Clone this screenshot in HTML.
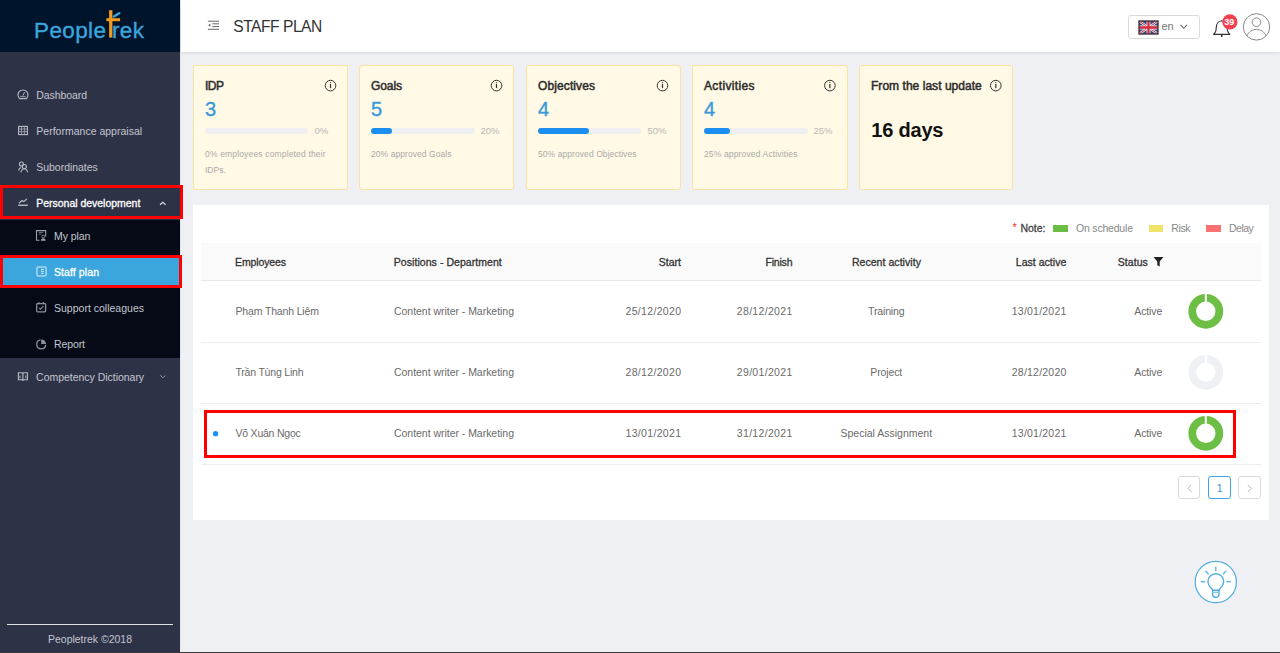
<!DOCTYPE html>
<html><head><meta charset="utf-8">
<style>
*{margin:0;padding:0;box-sizing:border-box}
html,body{width:1280px;height:653px;overflow:hidden;background:#eef0f4;font-family:"Liberation Sans",sans-serif;position:relative}
.a{position:absolute}
.tx{position:absolute;white-space:nowrap;line-height:1}
svg{position:absolute;overflow:visible}
</style></head><body>
<!-- sidebar -->
<div class="a" style="left:0;top:0;width:180px;height:653px;background:#2e3247"></div>
<div class="a" style="left:0;top:0;width:180px;height:52px;background:#00142b"></div>
<div class="a" style="left:180px;top:0;width:1px;height:653px;background:#e4e6ea"></div>
<div class="a" style="left:0;top:220px;width:180px;height:138px;background:#050a16"></div>
<!-- personal dev red box -->
<div class="a" style="left:0;top:185px;width:182.5px;height:34px;border:3px solid #ff0000"></div>
<!-- staff plan -->
<div class="a" style="left:0;top:255px;width:182px;height:33px;background:#3ba5de;border:3px solid #ff0000"></div>
<div class="a" style="left:7px;top:624px;width:166px;height:1px;background:#dfe1e6"></div>

<!-- logo -->
<svg width="180" height="52" style="left:0;top:0">
  <text x="34" y="37.6" font-family="Liberation Sans" font-size="22.5" fill="#3aa6df" textLength="72" lengthAdjust="spacing" stroke="#3aa6df" stroke-width="0.35">People</text>
  <text x="112" y="37.6" font-family="Liberation Sans" font-size="22.5" fill="#3aa6df" textLength="32" lengthAdjust="spacing" stroke="#3aa6df" stroke-width="0.35">rek</text>
  <rect x="109.1" y="10.2" width="3.3" height="27.4" fill="#f29a1d"/>
  <rect x="106.3" y="18.2" width="13.8" height="3" fill="#f29a1d"/>
  <path d="M113.8 16.6 L119.3 13.2" stroke="#3aa6df" stroke-width="2.4" stroke-linecap="round"/>
</svg>
<!-- sidebar icons -->
<svg width="180" height="400" style="left:0;top:0" fill="none" stroke="#b9bcc6" stroke-width="1.1">
  <!-- dashboard gauge -->
  <path d="M19.6 98.6 a5 5 0 1 1 6.8 0 z"/>
  <path d="M22.9 95.6 L24.6 92.2" stroke-width="1"/>
  <path d="M20.3 96.6 h5.2" stroke-width="0.8"/>
  <!-- grid -->
  <rect x="18.6" y="126.4" width="8.8" height="8.2"/>
  <path d="M18.6 129 h8.8 M18.6 131.7 h8.8 M21.5 126.4 v8.2 M24.4 126.4 v8.2" stroke-width="0.7"/>
  <!-- subordinates -->
  <circle cx="21.4" cy="164" r="2"/>
  <circle cx="24.3" cy="166.6" r="2.1"/>
  <path d="M18.5 170.5 c0.4-1.6 1.2-2.6 2.4-3.1 M20.9 172.3 c0.6-2.4 1.8-3.5 3.4-3.5 s2.8 1.1 3.4 3.5"/>
  <!-- personal dev chart -->
  <path d="M18.2 205.3 h9.6" stroke-width="1.4"/>
  <path d="M19 203.3 l3-2.8 1.8 1.1 3-2.6" stroke-width="1.2"/>
  <!-- chevron up -->
  <path d="M160 204.8 l2.8-2.6 2.8 2.6" stroke="#d8dae0" stroke-width="1.2"/>
  <!-- my plan -->
  <path d="M39.5 240.2 h-3 v-9.6 h9.2 v6" stroke="#9da0a8"/>
  <path d="M38.8 232.4 h4.5 M38.8 234.1 h2.5" stroke="#9da0a8" stroke-width="0.7"/>
  <circle cx="43.2" cy="236.6" r="1.4" stroke="#9da0a8" stroke-width="0.8"/>
  <path d="M40.8 240.8 c0-1.6 1-2.5 2.4-2.5 s2.4 0.9 2.4 2.5 z" fill="#9da0a8" stroke="none"/>
  <!-- staff plan -->
  <rect x="36.9" y="267.1" width="9.2" height="9" rx="1.3" stroke="#a9d8f2" stroke-width="1.5"/>
  <path d="M41 269.5 h2.6 M41 271.4 h2.6 M41 273.3 h2.6" stroke="#e6f5fc" stroke-width="0.9"/>
  <!-- support colleagues -->
  <rect x="36.7" y="303.6" width="8.9" height="8.2" rx="0.8" stroke="#8c9099" stroke-width="1.3"/>
  <path d="M38.9 302 v2.2 M43.3 302 v2.2" stroke="#8c9099" stroke-width="1.2"/>
  <path d="M39.2 307.8 l1.2 1.4 3.1-3" stroke="#8c9099" stroke-width="1.1"/>
  <!-- report -->
  <path d="M40.5 339.9 a4.5 4.5 0 1 0 5.2 5" stroke="#8c9099" stroke-width="1.3"/>
  <path d="M41.2 339.4 a4.6 4.6 0 0 1 4.8 4.6 h-4.8 z" fill="#8c9099" stroke="none"/>
  <!-- book -->
  <path d="M18.4 372.8 h3.6 l0.9 0.7 0.9-0.7 h3.6 v7 h-3.6 l-0.9 0.6-0.9-0.6 h-3.6 z M22.9 373.5 v6.8" stroke-width="1.1"/>
  <path d="M20 375.5 v2.8 M25.8 375.5 v2.8" stroke-width="0.9"/>
  <!-- chevron down -->
  <path d="M160.3 375.3 l2.6 2.5 2.6-2.5" stroke="#8a8ea0" stroke-width="1"/>
</svg>

<!-- header -->
<div class="a" style="left:181px;top:0;width:1099px;height:52px;background:#fff;box-shadow:0 1px 3px rgba(0,0,0,.10)"></div>
<svg width="30" height="30" style="left:200px;top:10px" fill="none" stroke="#666" stroke-width="1">
  <path d="M7.9 11.2 h11.1 M12.3 13.8 h6.7 M12.3 16.6 h6.7 M7.9 19.3 h11.1"/>
  <path d="M10.3 13.6 l-2 1.6 2 1.6z" fill="#555" stroke="none"/>
</svg>
<div class="a" style="left:1127.5px;top:15px;width:72px;height:23.5px;border:1px solid #dadada;border-radius:3px;background:#fff"></div>
<svg width="19" height="13" style="left:1139px;top:20.7px" viewBox="0 0 60 40" preserveAspectRatio="none">
  <rect width="60" height="40" fill="#3a4a8a"/>
  <path d="M0 0 L60 40 M60 0 L0 40" stroke="#e8e0e8" stroke-width="8"/>
  <path d="M0 0 L60 40 M60 0 L0 40" stroke="#b8323f" stroke-width="3"/>
  <path d="M30 0 V40 M0 20 H60" stroke="#f0e8ee" stroke-width="12"/>
  <path d="M30 0 V40 M0 20 H60" stroke="#d42a3a" stroke-width="7"/>
  <rect width="60" height="40" fill="none" stroke="#3a2a30" stroke-width="4"/>
</svg>
<svg width="12" height="8" style="left:1179.5px;top:23.8px" fill="none" stroke="#666" stroke-width="1.1">
  <path d="M0.6 0.8 L3.8 4.3 L7 0.8"/>
</svg>
<!-- bell -->
<svg width="30" height="30" style="left:1205px;top:10px" fill="none" stroke="#333" stroke-width="1.15">
  <path d="M8.6 24.3 c1.6-1 2.6-2.2 2.6-6.2 c0-4.4 2.4-7.2 5.5-7.4 c3.1 0.2 5.5 3 5.5 7.4 c0 4 1 5.2 2.6 6.2 z" stroke-linejoin="round"/>
  <path d="M16.7 24.8 v2.2" stroke-width="1.6"/>
</svg>
<svg width="18" height="18" style="left:1220.5px;top:13px">
  <circle cx="8.9" cy="8.9" r="7.6" fill="#f5414f"/>
</svg>
<!-- avatar -->
<svg width="32" height="32" style="left:1240px;top:10px" fill="none" stroke="#8a8a8a" stroke-width="1">
  <circle cx="16.5" cy="16.9" r="13.2"/>
  <circle cx="16.5" cy="12.2" r="4.3"/>
  <path d="M6.8 26 c2-4.5 5.6-6.6 9.7-6.6 s7.7 2.1 9.7 6.6"/>
</svg>

<!-- cards -->
<div class="a" style="left:192.5px;top:64.6px;width:155px;height:125px;background:#fff9e5;border:1px solid #f9e3a0;border-radius:3px"></div>
<div class="a" style="left:359px;top:64.6px;width:155px;height:125px;background:#fff9e5;border:1px solid #f9e3a0;border-radius:3px"></div>
<div class="a" style="left:525.5px;top:64.6px;width:155px;height:125px;background:#fff9e5;border:1px solid #f9e3a0;border-radius:3px"></div>
<div class="a" style="left:692px;top:64.6px;width:155.5px;height:125px;background:#fff9e5;border:1px solid #f9e3a0;border-radius:3px"></div>
<div class="a" style="left:858.8px;top:64.6px;width:154.6px;height:125px;background:#fff9e5;border:1px solid #f9e3a0;border-radius:3px"></div>
<!-- bars -->
<div class="a" style="left:205px;top:128px;width:103px;height:6px;border-radius:3px;background:#eeeff1"></div>
<div class="a" style="left:371px;top:128px;width:103.5px;height:6px;border-radius:3px;background:#eeeff1"></div>
<div class="a" style="left:371px;top:128px;width:20.5px;height:6px;border-radius:3px;background:#1c8ef0"></div>
<div class="a" style="left:537.7px;top:128px;width:103.5px;height:6px;border-radius:3px;background:#eeeff1"></div>
<div class="a" style="left:537.7px;top:128px;width:51.7px;height:6px;border-radius:3px;background:#1c8ef0"></div>
<div class="a" style="left:704px;top:128px;width:103.5px;height:6px;border-radius:3px;background:#eeeff1"></div>
<div class="a" style="left:704px;top:128px;width:26px;height:6px;border-radius:3px;background:#1c8ef0"></div>
<!-- info icons -->
<svg width="1280" height="100" style="left:0;top:0" fill="none" stroke="#333" stroke-width="1">
  <g id="inf"><circle cx="330.5" cy="85.6" r="5.3"/><path d="M330.5 84 v4.2" stroke-width="1.2"/><circle cx="330.5" cy="82.6" r="0.7" fill="#333" stroke="none"/></g>
  <use href="#inf" x="166"/><use href="#inf" x="332"/><use href="#inf" x="499.4"/><use href="#inf" x="665.3"/>
</svg>

<!-- table panel -->
<div class="a" style="left:193px;top:205px;width:1076px;height:315px;background:#fff"></div>
<div class="a" style="left:201px;top:243px;width:1060px;height:38px;background:#fafafa;border-bottom:1px solid #e8e8e8"></div>
<div class="a" style="left:201px;top:341.5px;width:1060px;height:1px;background:#ececec"></div>
<div class="a" style="left:201px;top:402.5px;width:1060px;height:1px;background:#ececec"></div>
<div class="a" style="left:201px;top:463.5px;width:1060px;height:1px;background:#ececec"></div>
<!-- note -->
<div class="tx" style="left:1012.5px;top:222px;font-size:11px;color:#f5222d">*</div>
<div class="a" style="left:1052.7px;top:224.5px;width:15.3px;height:7px;background:#6cbd45"></div>
<div class="a" style="left:1148.7px;top:224.5px;width:14.8px;height:7px;background:#f0e36a"></div>
<div class="a" style="left:1205.7px;top:224.5px;width:15.3px;height:7px;background:#f87272"></div>
<!-- filter icon -->
<svg width="12" height="12" style="left:1152.5px;top:256px">
  <path d="M0.5 1 h10 l-3.8 4.6 v5 l-2.4-1.3 v-3.7 z" fill="#222"/>
</svg>
<!-- donuts -->
<svg width="1280" height="653" style="left:0;top:0">
  <g fill="none" stroke-width="7.7">
    <circle cx="1205.8" cy="311.3" r="13.55" stroke="#6cbf44"/>
    <circle cx="1205.8" cy="372.3" r="13.55" stroke="#eef0f4"/>
    <circle cx="1205.8" cy="433.3" r="13.55" stroke="#6cbf44"/>
  </g>
  <g fill="#fff">
    <rect x="1204.8" y="293" width="2" height="10"/>
    <rect x="1204.8" y="354" width="2" height="10"/>
    <rect x="1204.8" y="415" width="2" height="10"/>
  </g>
  <circle cx="215.6" cy="433.7" r="2.6" fill="#1890ff"/>
</svg>
<!-- red row box -->
<div class="a" style="left:203.5px;top:410px;width:1032.5px;height:48px;border:3px solid #ff0000"></div>
<!-- pagination -->
<div class="a" style="left:1178.4px;top:476.3px;width:22px;height:23px;border:1px solid #d9d9d9;border-radius:3px;background:#fff"></div>
<div class="a" style="left:1208px;top:476.3px;width:23px;height:23px;border:1px solid #3ea4e8;border-radius:3px;background:#fff"></div>
<div class="a" style="left:1238.4px;top:476.3px;width:22.2px;height:23px;border:1px solid #d9d9d9;border-radius:3px;background:#fff"></div>
<svg width="1280" height="653" style="left:0;top:0" fill="none" stroke="#b5b5b5" stroke-width="1">
  <path d="M1191.3 484.7 l-3.3 3.6 3.3 3.6"/>
  <path d="M1248 484.7 l3.3 3.6 -3.3 3.6"/>
</svg>
<!-- light bulb -->
<svg width="1280" height="653" style="left:0;top:0" fill="none" stroke="#4fabdf" stroke-width="1.2">
  <circle cx="1215.8" cy="582" r="20.6" fill="#fff"/>
  <g stroke-width="1.5" stroke-linecap="round" stroke="#6bb9e6">
  <path d="M1215.8 567.3 v3.4 M1201.3 581.8 h3.4 M1226.8 581.8 h3.4 M1205.8 571.3 l2.3 2.3 M1225.8 571.3 l-2.3 2.3"/>
  </g>
  <path d="M1212.6 590.2 c-0.3-1.8-4.7-3.7-4.7-8.5 a7.9 7.9 0 0 1 15.8 0 c0 4.8-4.4 6.7-4.7 8.5 z" stroke-width="1.4"/>
  <path d="M1212.6 590.2 v4.3 a3.2 2.8 0 0 0 6.4 0 v-4.3" stroke-width="1.4"/>
  <path d="M1212.6 592.4 h6.4" stroke-width="1.6" stroke="#8cc8ea"/>
</svg>
<div class="a" style="left:0;top:652px;width:1280px;height:1px;background:#3a3a3a"></div>
<div class='tx' style='left:36.30px;top:90.00px;font-size:10.5px;color:#c3c6d0;letter-spacing:-0.072px;'>Dashboard</div>
<div class='tx' style='left:36.30px;top:126.00px;font-size:10.5px;color:#c3c6d0;letter-spacing:0.008px;'>Performance appraisal</div>
<div class='tx' style='left:36.30px;top:162.00px;font-size:10.5px;color:#c3c6d0;letter-spacing:-0.036px;'>Subordinates</div>
<div class='tx' style='left:36.30px;top:198.00px;font-size:10.5px;color:#fff;-webkit-text-stroke:0.3px #fff;letter-spacing:-0.025px;'>Personal development</div>
<div class='tx' style='left:54.00px;top:231.00px;font-size:10.5px;color:#c3c6d0;letter-spacing:-0.078px;'>My plan</div>
<div class='tx' style='left:54.00px;top:267.00px;font-size:10.5px;color:#fff;-webkit-text-stroke:0.3px #fff;letter-spacing:0.090px;'>Staff plan</div>
<div class='tx' style='left:54.00px;top:303.00px;font-size:10.5px;color:#c3c6d0;letter-spacing:0.006px;'>Support colleagues</div>
<div class='tx' style='left:54.00px;top:339.00px;font-size:10.5px;color:#c3c6d0;letter-spacing:-0.103px;'>Report</div>
<div class='tx' style='left:36.10px;top:372.00px;font-size:10.5px;color:#c3c6d0;letter-spacing:-0.027px;'>Competency Dictionary</div>
<div class='tx' style='left:48.00px;top:634.00px;font-size:10.5px;color:#c3c6d0;letter-spacing:-0.015px;'>Peopletrek ©2018</div>
<div class='tx' style='left:233.30px;top:19.00px;font-size:15.6px;color:#333;letter-spacing:-0.477px;'>STAFF PLAN</div>
<div class='tx' style='left:1161.50px;top:21.00px;font-size:11px;color:#777;'>en</div>
<div class='tx' style='left:205.00px;top:80.00px;font-size:12px;color:#2d2d2d;-webkit-text-stroke:0.5px #2d2d2d;letter-spacing:-0.508px;'>IDP</div>
<div class='tx' style='left:205.00px;top:99.00px;font-size:20px;color:#3a9ad9;-webkit-text-stroke:0.4px #3a9ad9;'>3</div>
<div class='tx' style='left:314.50px;top:126.00px;font-size:9.5px;color:#b8b8b8;'>0%</div>
<div class='tx' style='left:205.00px;top:150.00px;font-size:8.5px;color:#a9a9a9;letter-spacing:0.162px;'>0% employees completed their</div>
<div class='tx' style='left:371.00px;top:80.00px;font-size:12px;color:#2d2d2d;-webkit-text-stroke:0.5px #2d2d2d;letter-spacing:-0.090px;'>Goals</div>
<div class='tx' style='left:371.00px;top:99.00px;font-size:20px;color:#3a9ad9;-webkit-text-stroke:0.4px #3a9ad9;'>5</div>
<div class='tx' style='left:480.50px;top:126.00px;font-size:9.5px;color:#b8b8b8;'>20%</div>
<div class='tx' style='left:371.00px;top:150.00px;font-size:8.5px;color:#a9a9a9;letter-spacing:0.065px;'>20% approved Goals</div>
<div class='tx' style='left:538.00px;top:80.00px;font-size:12px;color:#2d2d2d;-webkit-text-stroke:0.5px #2d2d2d;letter-spacing:0.108px;'>Objectives</div>
<div class='tx' style='left:538.00px;top:99.00px;font-size:20px;color:#3a9ad9;-webkit-text-stroke:0.4px #3a9ad9;'>4</div>
<div class='tx' style='left:647.50px;top:126.00px;font-size:9.5px;color:#b8b8b8;'>50%</div>
<div class='tx' style='left:538.00px;top:150.00px;font-size:8.5px;color:#a9a9a9;letter-spacing:0.074px;'>50% approved Objectives</div>
<div class='tx' style='left:704.00px;top:80.00px;font-size:12px;color:#2d2d2d;-webkit-text-stroke:0.5px #2d2d2d;letter-spacing:0.362px;'>Activities</div>
<div class='tx' style='left:704.00px;top:99.00px;font-size:20px;color:#3a9ad9;-webkit-text-stroke:0.4px #3a9ad9;'>4</div>
<div class='tx' style='left:813.50px;top:126.00px;font-size:9.5px;color:#b8b8b8;'>25%</div>
<div class='tx' style='left:704.00px;top:150.00px;font-size:8.5px;color:#a9a9a9;letter-spacing:0.143px;'>25% approved Activities</div>
<div class='tx' style='left:205.00px;top:166.00px;font-size:8.5px;color:#a9a9a9;'>IDPs.</div>
<div class='tx' style='left:871.00px;top:80.00px;font-size:12px;color:#2d2d2d;-webkit-text-stroke:0.5px #2d2d2d;letter-spacing:0.039px;'>From the last update</div>
<div class='tx' style='left:871.20px;top:120.00px;font-size:20px;color:#111;font-weight:bold;letter-spacing:-0.182px;'>16 days</div>
<div class='tx' style='left:1020.50px;top:223.00px;font-size:10.5px;color:#444;-webkit-text-stroke:0.3px #444;letter-spacing:-0.027px;'>Note:</div>
<div class='tx' style='left:1076.00px;top:223.00px;font-size:10.5px;color:#888;letter-spacing:-0.197px;'>On schedule</div>
<div class='tx' style='left:1171.30px;top:223.00px;font-size:10.5px;color:#888;letter-spacing:-0.407px;'>Risk</div>
<div class='tx' style='left:1229.00px;top:223.00px;font-size:10.5px;color:#888;letter-spacing:-0.515px;'>Delay</div>
<div class='tx' style='left:235.00px;top:257.00px;font-size:10.5px;color:#333;-webkit-text-stroke:0.3px #333;letter-spacing:-0.119px;'>Employees</div>
<div class='tx' style='left:393.80px;top:257.00px;font-size:10.5px;color:#333;-webkit-text-stroke:0.3px #333;letter-spacing:0.057px;'>Positions - Department</div>
<div class='tx' style='left:658.75px;top:257.00px;font-size:10.5px;color:#333;-webkit-text-stroke:0.3px #333;letter-spacing:0.016px;'>Start</div>
<div class='tx' style='left:765.50px;top:257.00px;font-size:10.5px;color:#333;-webkit-text-stroke:0.3px #333;letter-spacing:-0.203px;'>Finish</div>
<div class='tx' style='left:851.90px;top:257.00px;font-size:10.5px;color:#333;-webkit-text-stroke:0.3px #333;letter-spacing:0.051px;'>Recent activity</div>
<div class='tx' style='left:1015.80px;top:257.00px;font-size:10.5px;color:#333;-webkit-text-stroke:0.3px #333;letter-spacing:0.030px;'>Last active</div>
<div class='tx' style='left:1117.80px;top:257.00px;font-size:10.5px;color:#333;-webkit-text-stroke:0.3px #333;letter-spacing:0.044px;'>Status</div>
<div class='tx' style='left:235.50px;top:306.00px;font-size:10.5px;color:#6a6a6a;letter-spacing:-0.151px;'>Phạm Thanh Liêm</div>
<div class='tx' style='left:394.00px;top:306.00px;font-size:10.5px;color:#6a6a6a;letter-spacing:-0.032px;'>Content writer - Marketing</div>
<div class='tx' style='left:625.50px;top:306.00px;font-size:10.5px;color:#6a6a6a;letter-spacing:0.326px;'>25/12/2020</div>
<div class='tx' style='left:736.80px;top:306.00px;font-size:10.5px;color:#6a6a6a;letter-spacing:0.326px;'>28/12/2021</div>
<div class='tx' style='left:868.00px;top:306.00px;font-size:10.5px;color:#6a6a6a;letter-spacing:-0.135px;'>Training</div>
<div class='tx' style='left:1011.80px;top:306.00px;font-size:10.5px;color:#6a6a6a;letter-spacing:0.215px;'>13/01/2021</div>
<div class='tx' style='left:1134.30px;top:306.00px;font-size:10.5px;color:#6a6a6a;letter-spacing:-0.119px;'>Active</div>
<div class='tx' style='left:235.50px;top:367.00px;font-size:10.5px;color:#6a6a6a;letter-spacing:-0.203px;'>Trần Tùng Linh</div>
<div class='tx' style='left:394.00px;top:367.00px;font-size:10.5px;color:#6a6a6a;letter-spacing:-0.032px;'>Content writer - Marketing</div>
<div class='tx' style='left:625.50px;top:367.00px;font-size:10.5px;color:#6a6a6a;letter-spacing:0.326px;'>28/12/2020</div>
<div class='tx' style='left:736.80px;top:367.00px;font-size:10.5px;color:#6a6a6a;letter-spacing:0.326px;'>29/01/2021</div>
<div class='tx' style='left:870.30px;top:367.00px;font-size:10.5px;color:#6a6a6a;letter-spacing:-0.115px;'>Project</div>
<div class='tx' style='left:1011.80px;top:367.00px;font-size:10.5px;color:#6a6a6a;letter-spacing:0.215px;'>28/12/2020</div>
<div class='tx' style='left:1134.30px;top:367.00px;font-size:10.5px;color:#6a6a6a;letter-spacing:-0.119px;'>Active</div>
<div class='tx' style='left:235.50px;top:428.00px;font-size:10.5px;color:#6a6a6a;letter-spacing:-0.220px;'>Võ Xuân Ngọc</div>
<div class='tx' style='left:394.00px;top:428.00px;font-size:10.5px;color:#6a6a6a;letter-spacing:-0.032px;'>Content writer - Marketing</div>
<div class='tx' style='left:625.50px;top:428.00px;font-size:10.5px;color:#6a6a6a;letter-spacing:0.326px;'>13/01/2021</div>
<div class='tx' style='left:736.80px;top:428.00px;font-size:10.5px;color:#6a6a6a;letter-spacing:0.326px;'>31/12/2021</div>
<div class='tx' style='left:840.55px;top:428.00px;font-size:10.5px;color:#6a6a6a;letter-spacing:-0.008px;'>Special Assignment</div>
<div class='tx' style='left:1011.80px;top:428.00px;font-size:10.5px;color:#6a6a6a;letter-spacing:0.215px;'>13/01/2021</div>
<div class='tx' style='left:1134.30px;top:428.00px;font-size:10.5px;color:#6a6a6a;letter-spacing:-0.119px;'>Active</div>
<div class='tx' style='left:1216.80px;top:483.00px;font-size:10.5px;color:#3e8ee8;'>1</div>
<div class='tx' style='left:1224.30px;top:18.00px;font-size:9px;color:#fff;font-weight:bold;letter-spacing:-0.016px;'>39</div>
</body></html>
